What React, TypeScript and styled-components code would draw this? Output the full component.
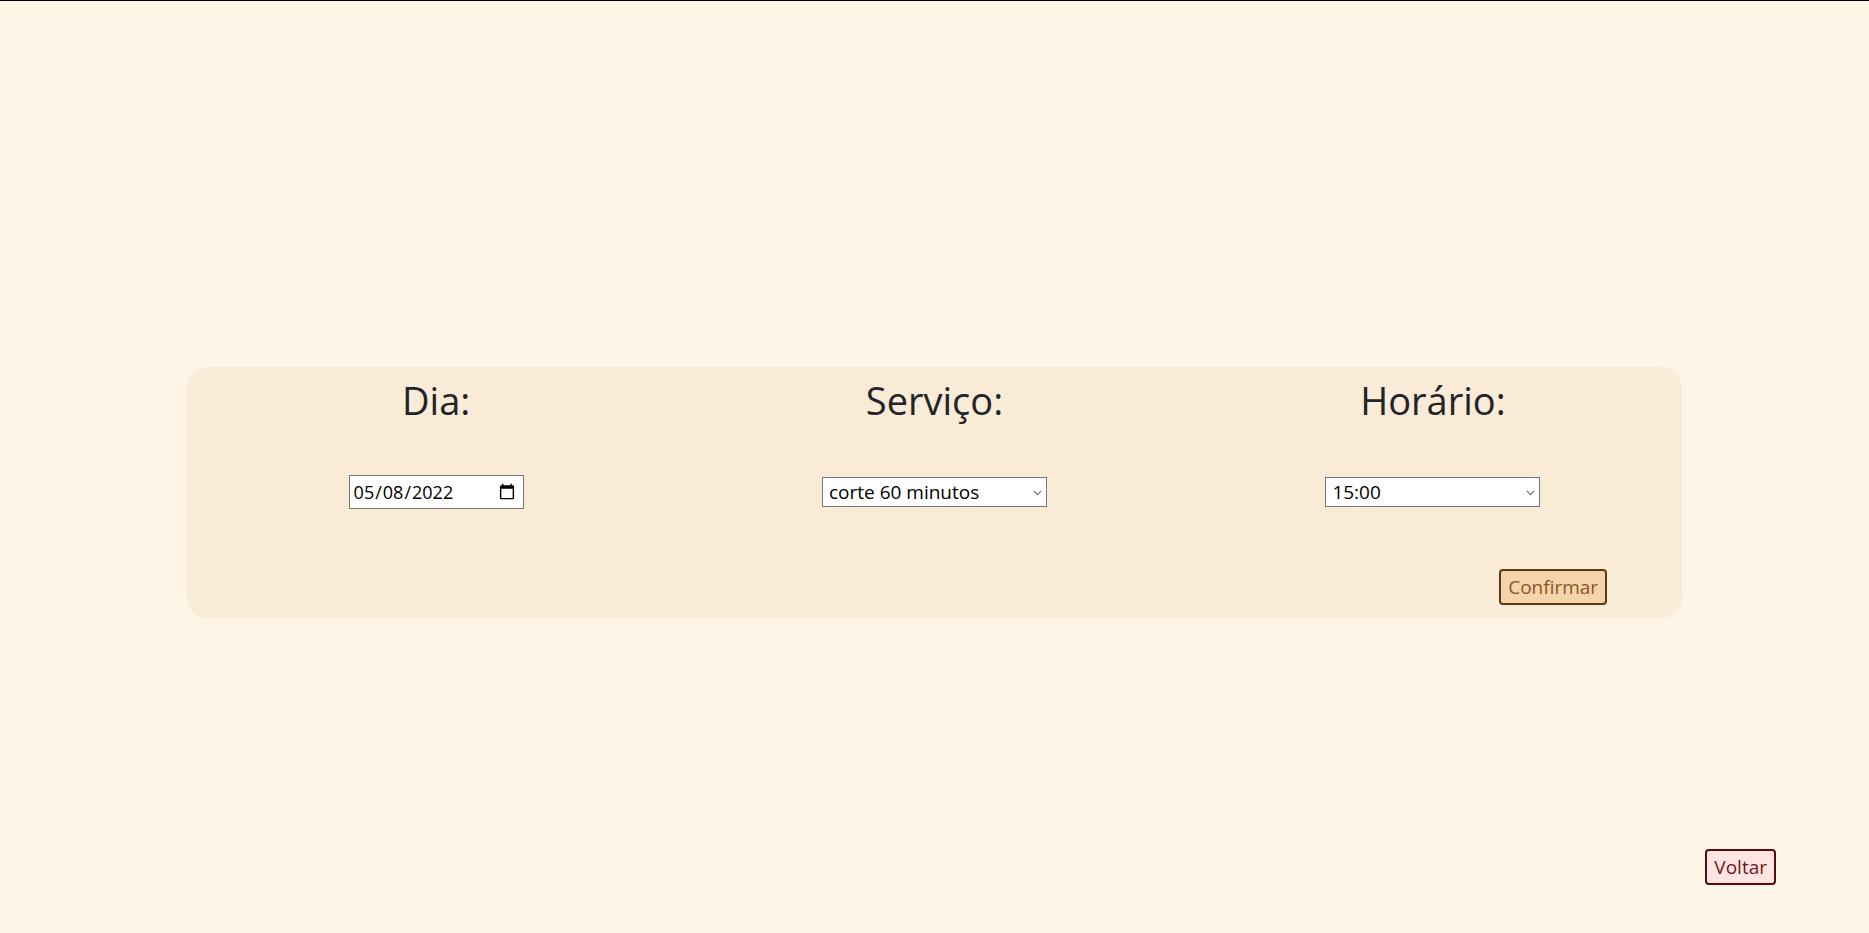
import React from 'react';
import styled, { createGlobalStyle } from 'styled-components';

const GlobalStyle = createGlobalStyle`
  html, body {
    margin: 0;
    padding: 0;
    background: #fdf5e6;
  }

  body {
    font-family: "Open Sans", "Noto Sans", sans-serif;
    color: #212529;
  }

  * {
    box-sizing: border-box;
  }
`;

const Page = styled.div`
  min-height: 100vh;
  border-top: 1px solid #000;
  background: #fdf5e6;
  display: flex;
  flex-direction: column;
`;

const Card = styled.form`
  width: 80%;
  margin: 366px auto 0;
  padding: 8px 0 13px;
  background: #faebd7;
  border-radius: 20px;
`;

const Fields = styled.div`
  display: grid;
  grid-template-columns: repeat(3, 1fr);
`;

const Field = styled.div`
  display: flex;
  flex-direction: column;
  align-items: center;
`;

const Label = styled.label`
  margin: 0;
  font-size: 38px;
  line-height: 50px;
  font-weight: 400;
  color: #212529;
`;

const Control = styled.div`
  margin-top: 50px;
  height: 34px;
  display: flex;
  align-items: center;
`;

const DateInput = styled.input`
  width: 175px;
  height: 34px;
  padding: 0 5px 0 3px;
  border: 1px solid #767676;
  border-radius: 0;
  background: #fff;
  color: #000;
  font-family: inherit;
  font-size: 18px;
`;

const SelectWrap = styled.div`
  position: relative;
  display: flex;
`;

const Select = styled.select<{ $width: number }>`
  appearance: none;
  width: ${p => p.$width}px;
  height: 30px;
  padding: 0 20px 0 6px;
  border: 1px solid #767676;
  border-radius: 0;
  background: #fff;
  color: #000;
  font-family: inherit;
  font-size: 19px;
  outline: none;
`;

const Chevron = styled.svg`
  position: absolute;
  right: 5px;
  top: 50%;
  width: 9px;
  height: 6px;
  margin-top: -2px;
  pointer-events: none;
`;

const Footer = styled.div`
  margin-top: 60px;
  padding-right: 75px;
  display: flex;
  justify-content: flex-end;
`;

const Button = styled.button<{ $bg: string; $border: string; $color: string }>`
  height: 36px;
  padding: 0 7px;
  border: 2px solid ${p => p.$border};
  border-radius: 4px;
  background: ${p => p.$bg};
  color: ${p => p.$color};
  font-family: inherit;
  font-size: 19px;
  cursor: pointer;
`;

const BackRow = styled.div`
  margin-top: 231px;
  padding-right: 93px;
  display: flex;
  justify-content: flex-end;
`;

const ArrowDown = () => (
  <Chevron viewBox="0 0 9 6">
    <path d="M0.8 0.8 L4.5 4.6 L8.2 0.8" fill="none" stroke="#6d6d6d" strokeWidth="1.1" />
  </Chevron>
);

export default function App() {
  return (
    <>
      <GlobalStyle />
      <Page>
        <Card onSubmit={e => e.preventDefault()}>
          <Fields>
            <Field>
              <Label htmlFor="dia">Dia:</Label>
              <Control>
                <DateInput id="dia" type="date" defaultValue="2022-05-08" />
              </Control>
            </Field>
            <Field>
              <Label htmlFor="servico">Serviço:</Label>
              <Control>
                <SelectWrap>
                  <Select id="servico" $width={225} defaultValue="corte60">
                    <option value="corte30">corte 30 minutos</option>
                    <option value="corte60">corte 60 minutos</option>
                  </Select>
                  <ArrowDown />
                </SelectWrap>
              </Control>
            </Field>
            <Field>
              <Label htmlFor="horario">Horário:</Label>
              <Control>
                <SelectWrap>
                  <Select id="horario" $width={215} defaultValue="15:00">
                    <option value="14:00">14:00</option>
                    <option value="15:00">15:00</option>
                    <option value="16:00">16:00</option>
                  </Select>
                  <ArrowDown />
                </SelectWrap>
              </Control>
            </Field>
          </Fields>
          <Footer>
            <Button type="submit" $bg="#f5d4ac" $border="#5c3a12" $color="#87562a">
              Confirmar
            </Button>
          </Footer>
        </Card>
        <BackRow>
          <Button type="button" $bg="#ffe4e1" $border="#5a0a0a" $color="#6e1818">
            Voltar
          </Button>
        </BackRow>
      </Page>
    </>
  );
}
